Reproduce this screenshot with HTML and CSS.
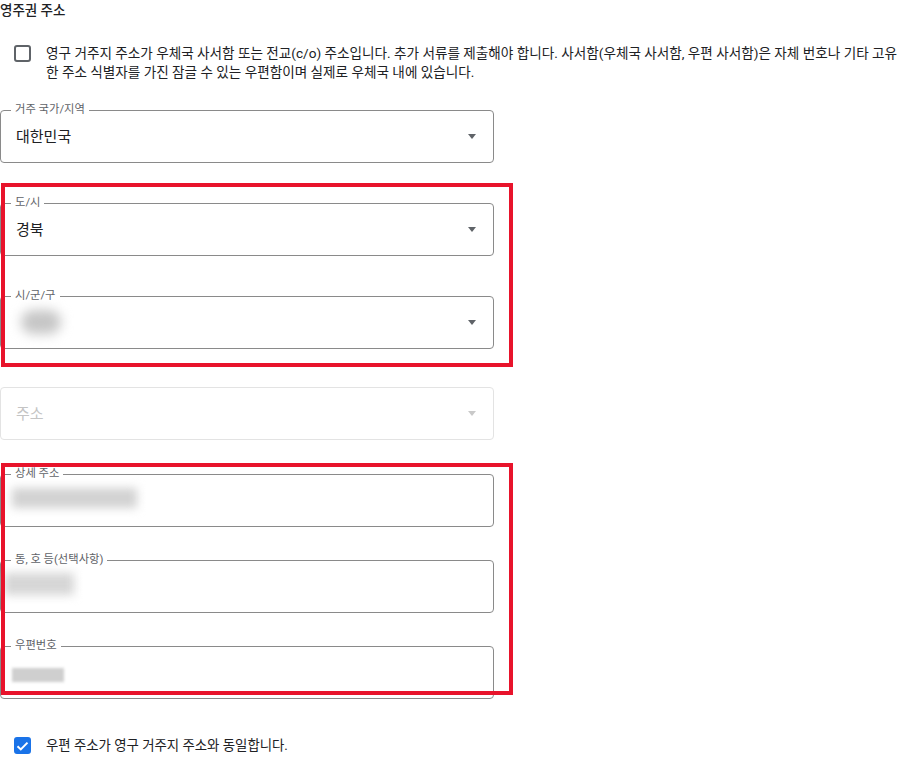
FILE: index.html
```html
<!DOCTYPE html>
<html lang="ko">
<head>
  <meta charset="UTF-8">
  <title>영주권 주소</title>
  <link rel="stylesheet" href="styles.css">
</head>
<body>
  <div class="page">
    <h2 class="title">영주권 주소</h2>

    <label class="check-row">
      <span class="box"></span>
      <span class="check-text">영구 거주지 주소가 우체국 사서함 또는 전교(c/o) 주소입니다. 추가 서류를 제출해야 합니다. 사서함(우체국 사서함, 우편 사서함)은 자체 번호나 기타 고유한 주소 식별자를 가진 잠글 수 있는 우편함이며 실제로 우체국 내에 있습니다.</span>
    </label>

    <div class="field first">
      <span class="float">거주 국가/지역</span>
      <span class="value">대한민국</span>
      <span class="arrow"></span>
    </div>

    <div class="field">
      <span class="float">도/시</span>
      <span class="value">경북</span>
      <span class="arrow"></span>
    </div>

    <div class="field">
      <span class="float">시/군/구</span>
      <span class="blur blur-city"></span>
      <span class="arrow"></span>
    </div>

    <div class="field disabled">
      <span class="value">주소</span>
      <span class="arrow"></span>
    </div>

    <div class="field group2">
      <span class="float">상세 주소</span>
      <span class="blur blur-street"></span>
    </div>

    <div class="field tight">
      <span class="float">동, 호 등(선택사항)</span>
      <span class="blur blur-unit"></span>
    </div>

    <div class="field tight">
      <span class="float">우편번호</span>
      <span class="blur blur-zip"></span>
    </div>

    <label class="check-row checked-row">
      <span class="box checked">
        <svg width="13" height="10" viewBox="0 0 13 10"><path d="M1.5 5.2 L4.8 8.4 L11.5 1.6" fill="none" stroke="#fff" stroke-width="2"/></svg>
      </span>
      <span class="check-text">우편 주소가 영구 거주지 주소와 동일합니다.</span>
    </label>

    <!-- review highlights -->
    <div class="mark mark-one"></div>
    <div class="mark mark-two"></div>
  </div>
</body>
</html>
```

FILE: styles.css
```css
body {
  margin: 0;
  background: #fff;
  font-family: Roboto, "Noto Sans CJK KR", sans-serif;
  color: #202124;
}
.page {
  position: relative;
  width: 898px;
}
.title {
  margin: 0;
  font-size: 13.5px;
  font-weight: 500;
  line-height: 20px;
}
.check-row {
  display: flex;
  gap: 15px;
  margin-top: 24px;
  padding-left: 14px;
  font-size: 13.6px;
  line-height: 19px;
}
.box {
  flex: none;
  width: 17px;
  height: 17px;
  margin-top: 1px;
  box-sizing: border-box;
  border: 2px solid #5f6368;
  border-radius: 3px;
  display: flex;
  align-items: center;
  justify-content: center;
}
.box.checked {
  background: #1a73e8;
  border-color: #1a73e8;
}
.checked-row {
  margin-top: 37px;
  align-items: center;
  font-size: 13.4px;
}
.checked-row .box {
  margin-top: 0;
}
.field {
  position: relative;
  width: 494px;
  height: 53px;
  box-sizing: border-box;
  border: 1px solid #8a8a8a;
  border-radius: 4px;
  margin-top: 40px;
  padding: 0 17px 0 15px;
  display: flex;
  align-items: center;
}
.field.first {
  margin-top: 28px;
}
.field.disabled {
  margin-top: 38px;
  border-color: #e3e3e3;
  color: #c4c4c4;
}
.field.group2 {
  margin-top: 34px;
}
.field.tight {
  margin-top: 33px;
}
.float {
  position: absolute;
  top: -8px;
  left: 10px;
  padding: 0 4px;
  background: #fff;
  font-size: 11.3px;
  line-height: 14px;
  color: #5f6368;
}
.value {
  font-size: 15px;
  margin-top: -3px;
}
.arrow {
  margin-left: auto;
  width: 0;
  height: 0;
  border-left: 4.5px solid transparent;
  border-right: 4.5px solid transparent;
  border-top: 5px solid #5f6368;
}
.disabled .arrow {
  border-top-color: #c9c9c9;
}
.blur {
  display: block;
  background: #c6c6c6;
  filter: blur(5px);
}
.blur-city {
  width: 40px;
  height: 24px;
  margin-left: 5px;
  margin-top: -2px;
  border-radius: 14px;
  filter: blur(6px);
}
.blur-street {
  width: 125px;
  height: 20px;
  margin-left: -4px;
  margin-top: -6px;
  background: #d2d2d2;
}
.blur-unit {
  width: 70px;
  height: 22px;
  margin-left: -12px;
  margin-top: -6px;
  background: #d6d6d6;
}
.blur-zip {
  width: 52px;
  height: 14px;
  margin-left: -4px;
  margin-top: 4px;
  background: #cfcfcf;
  filter: blur(1.5px);
}
.mark {
  position: absolute;
  left: 1px;
  width: 512px;
  box-sizing: border-box;
  border: 4px solid #e8132b;
}
.mark-one {
  top: 183px;
  height: 184px;
}
.mark-two {
  top: 463px;
  height: 232px;
}
```
